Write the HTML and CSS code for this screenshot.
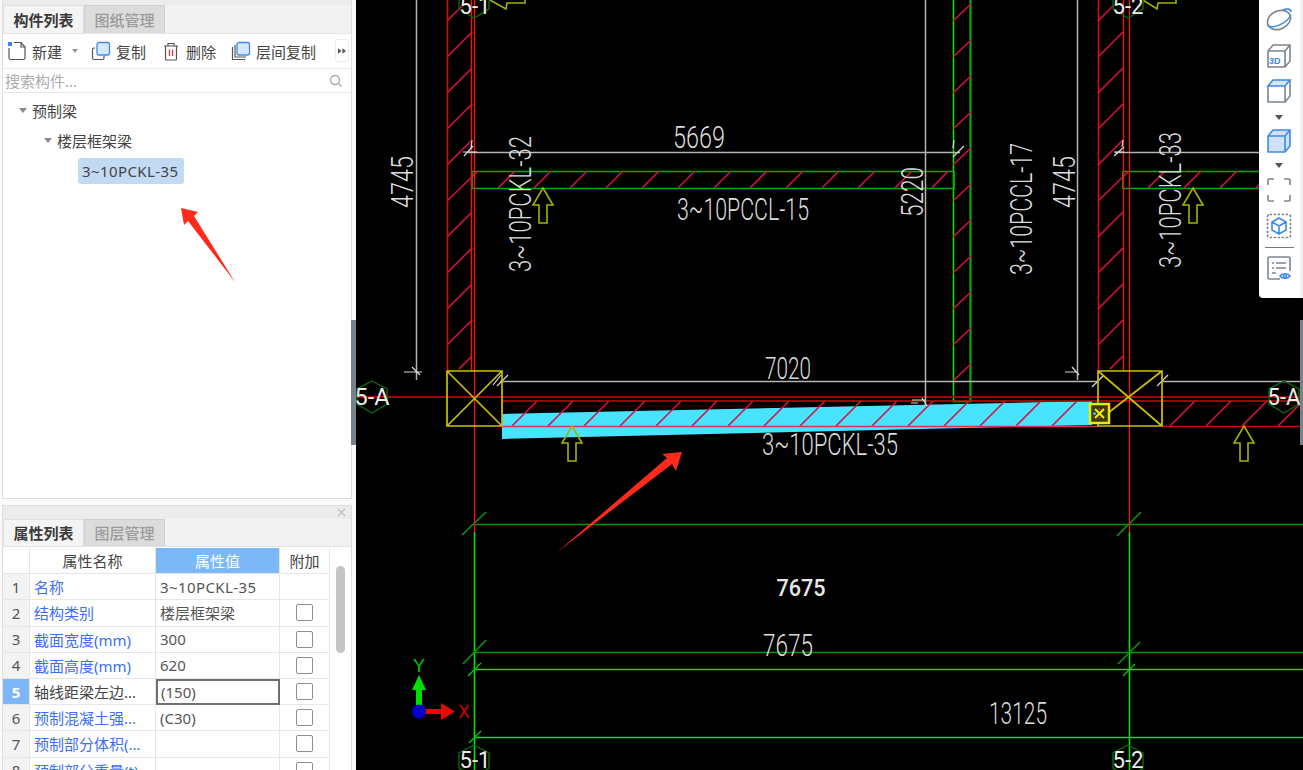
FILE: index.html
```html
<!DOCTYPE html>
<html lang="zh">
<head>
<meta charset="utf-8">
<title>构件列表</title>
<link rel="stylesheet" href="styles.css">
</head>
<body>
<div class="app">
  <aside class="sidebar">
    <section class="panel panel-list">
      <div class="panel-top thin"></div>
      <div class="tabs">
        <div class="tab active">构件列表</div>
        <div class="tab">图纸管理</div>
      </div>
      <div class="tools">
        <div class="tool t-new">
          <svg class="ico" viewBox="0 0 20 20"><path class="ln" d="M2 7v10a1.500 1.500 0 0 0 1.500 1.500h13a1.500 1.500 0 0 0 1.500-1.500V6l-4-4.500H7"/><path class="ln" d="M14 1.500V6h4"/><rect class="bl" x="1" y="1" width="4" height="4"/></svg>
          <span>新建</span><i class="caret"></i>
        </div>
        <div class="tool t-copy">
          <svg class="ico" viewBox="0 0 20 20"><path class="ln" d="M4 7H3a1.500 1.500 0 0 0-1.500 1.500v8.500A1.500 1.500 0 0 0 3 18.500h8.500A1.500 1.500 0 0 0 13 17v-2"/><rect class="blf" x="6" y="1.500" width="12.500" height="12.500" rx="2"/></svg>
          <span>复制</span>
        </div>
        <div class="tool t-del">
          <svg class="ico" viewBox="0 0 20 20"><path class="ln" d="M3 5h14M7 5V2.500h6V5M4.500 5v13a1 1 0 0 0 1 1h9a1 1 0 0 0 1-1V5"/><path class="rd" d="M8.500 8.500v6.500M11.500 8.500v6.500"/></svg>
          <span>删除</span>
        </div>
        <div class="tool t-floor">
          <svg class="ico" viewBox="0 0 20 20"><path class="ln" d="M1.500 6v12.500H14M4 4v12h11"/><rect class="blf" x="6" y="1.500" width="12.500" height="12.500" rx="2"/></svg>
          <span>层间复制</span>
        </div>
        <div class="more"><svg class="more-ico" viewBox="0 0 9 6"><path d="M0 0l4 3-4 3ZM5 0l4 3-4 3Z"/></svg></div>
      </div>
      <div class="search">
        <span>搜索构件...</span>
        <svg class="mag" viewBox="0 0 14 14"><circle cx="6" cy="6" r="4.500"/><path d="M9.500 9.500l3 3"/></svg>
      </div>
      <ul class="tree">
        <li class="lvl1"><i class="arrow"></i>预制梁</li>
        <li class="lvl2"><i class="arrow"></i>楼层框架梁</li>
        <li class="lvl3"><span class="chip">3~10PCKL-35</span></li>
      </ul>
    </section>

    <section class="panel panel-props">
      <div class="panel-top"><svg class="close" viewBox="0 0 10 10"><path d="M1 1l8 8M9 1l-8 8"/></svg></div>
      <div class="tabs">
        <div class="tab active">属性列表</div>
        <div class="tab">图层管理</div>
      </div>
      <div class="props">
        <div class="grid">
          <div class="c num"></div><div class="c head">属性名称</div><div class="c head hl">属性值</div><div class="c head">附加</div>
          <div class="c num">1</div><div class="c name">名称</div><div class="c val wide">3~10PCKL-35</div><div class="c chk"></div>
          <div class="c num">2</div><div class="c name">结构类别</div><div class="c val">楼层框架梁</div><div class="c chk"><i></i></div>
          <div class="c num">3</div><div class="c name">截面宽度(mm)</div><div class="c val">300</div><div class="c chk"><i></i></div>
          <div class="c num">4</div><div class="c name">截面高度(mm)</div><div class="c val">620</div><div class="c chk"><i></i></div>
          <div class="c num sel">5</div><div class="c name plain">轴线距梁左边...</div><div class="c val edit">(150)</div><div class="c chk"><i></i></div>
          <div class="c num">6</div><div class="c name">预制混凝土强...</div><div class="c val">(C30)</div><div class="c chk"><i></i></div>
          <div class="c num">7</div><div class="c name">预制部分体积(...</div><div class="c val"></div><div class="c chk"><i></i></div>
          <div class="c num">8</div><div class="c name">预制部分重量(t)</div><div class="c val"></div><div class="c chk"><i></i></div>
        </div>
        <div class="scroll"><div class="thumb"></div></div>
      </div>
    </section>

    <div class="splitter"></div>
    <svg class="mark" viewBox="0 0 60 80"><polygon points="4,4 21,8 17,12 58,78 11,17 7,21"/></svg>
  </aside>

  <main class="canvas">
    <svg class="cad-svg" viewBox="356 0 947 770">
      <!-- green grid below -->
      <path class="g-dk" d="M474 524.500H1303M474 652.500H1303"/>
      <path class="g-br" d="M474 669.500H1303M474 737.500H1303M474.500 532V770M1129.500 532V770"/>
      <path class="g-dk" d="M462 535l24-23M1117 536l24-24M463 664l23-24M1118 664l22-22"/>
      <path class="g-br1" d="M468 676l13-13M1123 676l12-12M469 743l12-12"/>

      <!-- cyan beam -->
      <polygon class="cyan" points="502,414 1092,401 1092,425 502,439"/>

      <!-- green members -->
      <path class="g-br" d="M953.500 0V401.500H970.500V0"/>
      <path class="g-dk2" d="M970.500 0V401.500M472 171.500H954V188.500H472ZM1260 171.500H1123V188.500H1260"/>
      <!-- hatching -->
      <path class="hatch" d="M447 21l16-16M447 57l25-25M447 93l25-25M447 129l25-25M447 165l25-25M447 201l31-30M447 237l25-25M447 273l25-25M447 309l25-25M447 345l25-25M459 369l13-13"/>
      <path class="hatch" d="M1098 21l16-16M1098 57l25-25M1098 93l25-25M1098 129l25-25M1098 165l25-25M1098 201l31-30M1098 237l25-25M1098 273l25-25M1098 309l25-25M1098 345l25-25M1110 369l13-13"/>
      <path class="hatch" d="M953 21l18-17M953 57l18-17M953 93l18-17M953 129l18-17M953 165l18-17M953 201l18-17M953 237l18-17M953 273l18-17M953 309l18-17M953 345l18-17M953 381l18-17"/>
      <path class="hatch" d="M498 188l17-17M534 188l17-17M570 188l17-17M606 188l17-17M642 188l17-17M678 188l17-17M714 188l17-17M750 188l17-17M786 188l17-17M822 188l17-17M858 188l17-17M895 188l17-17M932 188l16-17M1148 188l17-17M1184 188l17-17M1220 188l17-17M1256 188l8-8"/>
      <path class="hatch" d="M512 426l25-25M548 426l25-25M584 426l25-25M620 426l25-25M656 426l25-25M692 426l25-25M728 426l25-25M764 426l25-25M800 426l25-25M836 426l25-25M872 426l25-25M908 426l25-25M944 426l25-25M980 426l25-25M1016 426l25-25M1052 426l25-25M1170 426l25-25M1206 426l25-25M1242 426l25-25M1278 426l25-25"/>

      <!-- red lines -->
      <path class="r-dk" d="M356 397H1303"/>
      <path class="r-v" d="M447.500 0V371M1098.500 0V371"/>
      <path class="r-md" d="M502 401H1303M1162 401V426M502 401V414"/>
      <path class="r-pk" d="M502 426.500H1098"/>
      <path class="r-md" d="M1162 426.500H1303"/>
      <path class="r-br" d="M471.500 0V371M474.500 0V532M1123.500 0V371M1129.500 0V532"/>

      <!-- dimension lines -->
      <path class="dim" d="M416.500 0V380M468 152.500H960M1115 152.500H1260M925.500 0V405M1077.500 0V380M500 381.500H1098M1162 381.500H1303"/>
      <path class="dim1" d="M463 152h14M473 146l-9 10M472 140l-1 8M953 157l11-11M954 140l-1 8M1114 152h10M1124 147l-10 9M1123 140l-1 7M404 372h18M412 367l8 8M497 386l11-11M501 375l-8 10M1092 387l11-11M1157 386l11-11M918 403h-7M922 398l5 8M912 400h14M1065 372h11M1072 367l7 8"/>

      <!-- columns -->
      <path class="yel" d="M447 371H502V426H447ZM447 371L502 426M502 371L447 426M1098 371H1162V426H1098ZM1098 371L1162 426M1162 371L1108 413"/>

      <!-- snap marker -->
      <rect class="snap" x="1090" y="404" width="19" height="19"/>
      <path class="snap-x" d="M1095 409l9 9M1104 409l-9 9"/>
      <circle class="snap-r" cx="1099.500" cy="409" r="1"/>
      <circle class="snap-r" cx="1099.500" cy="418" r="1"/>
      <circle class="snap-c" cx="1094.500" cy="413.500" r="1.500"/>

      <!-- arrows -->
      <path class="up" d="M572 426l10 17h-6v18h-8v-18h-6Z"/>
      <path class="up" d="M543 188l10 17h-6v18h-8v-18h-6Z"/>
      <path class="up" d="M1193 188l10 17h-6v18h-8v-18h-6Z"/>
      <path class="up" d="M1244 426l10 17h-6v18h-8v-18h-6Z"/>
      <path class="up" d="M490 0l16 9 1-6h18V0"/>
      <path class="up" d="M1143 0l14 9 1-6h18V0"/>

      <!-- axis hexagons -->
      <path class="hex" d="M372 381l15 8v15l-15 9-15-9v-15Z"/>
      <path class="hex" d="M1284 381l15 8v15l-15 9-15-9v-15Z"/>
      <path class="hex" d="M474 -14l15 8v15l-15 9-15-9v-15Z"/>
      <path class="hex" d="M1128 -14l15 8v15l-15 9-15-9v-15Z"/>
      <path class="hex" d="M474 745l15 8v15l-15 9-15-9v-15Z"/>
      <path class="hex" d="M1128 745l15 8v15l-15 9-15-9v-15Z"/>

      <!-- CAD texts -->
      <text class="cad" x="699" y="148" textLength="52" lengthAdjust="spacingAndGlyphs">5669</text>
      <text class="cad" x="743" y="220" textLength="132" lengthAdjust="spacingAndGlyphs">3~10PCCL-15</text>
      <text class="cad" x="788" y="379" textLength="46" lengthAdjust="spacingAndGlyphs">7020</text>
      <text class="cad" x="830" y="455" textLength="136" lengthAdjust="spacingAndGlyphs">3~10PCKL-35</text>
      <text class="cad" x="788" y="656" textLength="50" lengthAdjust="spacingAndGlyphs">7675</text>
      <text class="cad" x="1018" y="724" textLength="58" lengthAdjust="spacingAndGlyphs">13125</text>
      <text class="cad" transform="rotate(-90 413 182)" x="413" y="182" textLength="52" lengthAdjust="spacingAndGlyphs">4745</text>
      <text class="cad" transform="rotate(-90 531 204)" x="531" y="204" textLength="136" lengthAdjust="spacingAndGlyphs">3~10PCKL-32</text>
      <text class="cad" transform="rotate(-90 923 192)" x="923" y="192" textLength="50" lengthAdjust="spacingAndGlyphs">5220</text>
      <text class="cad" transform="rotate(-90 1032 209)" x="1032" y="209" textLength="132" lengthAdjust="spacingAndGlyphs">3~10PCCL-17</text>
      <text class="cad" transform="rotate(-90 1075 182)" x="1075" y="182" textLength="52" lengthAdjust="spacingAndGlyphs">4745</text>
      <text class="cad" transform="rotate(-90 1181 200)" x="1181" y="200" textLength="136" lengthAdjust="spacingAndGlyphs">3~10PCKL-33</text>
      <text class="axis" x="372" y="405" textLength="35" lengthAdjust="spacingAndGlyphs">5-A</text>
      <text class="axis" x="1284" y="405" textLength="33" lengthAdjust="spacingAndGlyphs">5-A</text>
      <text class="axis" x="475" y="14" textLength="31" lengthAdjust="spacingAndGlyphs">5-1</text>
      <text class="axis" x="1128" y="14" textLength="31" lengthAdjust="spacingAndGlyphs">5-2</text>
      <text class="axis" x="475" y="768" textLength="31" lengthAdjust="spacingAndGlyphs">5-1</text>
      <text class="axis" x="1128" y="768" textLength="31" lengthAdjust="spacingAndGlyphs">5-2</text>
      <text class="bold-dim" x="801" y="596" textLength="49" lengthAdjust="spacingAndGlyphs">7675</text>

      <!-- coordinate axes -->
      <path class="ax-g" d="M419 675l7 15h-4v16h-6v-16h-4Z"/>
      <path class="ax-r" d="M425 709h16v-6l14 8.500-14 8.500v-6h-16Z"/>
      <circle class="ax-b" cx="419" cy="711.500" r="7"/>
      <text class="ax-y" x="419" y="672" textLength="12" lengthAdjust="spacingAndGlyphs">Y</text>
      <text class="ax-x" x="464" y="718" textLength="11" lengthAdjust="spacingAndGlyphs">X</text>

      <!-- annotation arrow -->
      <polygon class="mark-fill" points="556,553 667,458 662,454 682,452 676,471 672,464"/>
    </svg>

    <nav class="viewbar">
      <svg class="vb v-planet" viewBox="0 0 26 26"><ellipse class="gr" cx="13" cy="13" rx="12" ry="9" transform="rotate(-25 13 13)"/><path class="blu" d="M1 18c6 5 20-2 24-10M17 3c4-2 8-1 8 2"/></svg>
      <svg class="vb v-3d" viewBox="0 0 26 26"><path class="gr" d="M2 8l5-6h17v16l-5 6H2ZM2 8h17v16M19 8l5-6"/><text class="t3d" x="3" y="21">3D</text></svg>
      <svg class="vb v-top" viewBox="0 0 26 26"><path class="gr" d="M2 8v16h17l5-6V2M19 8v16"/><path class="bluf" d="M2 8l5-6h17l-5 6Z"/></svg>
      <i class="vcaret c-one"></i>
      <svg class="vb v-solid" viewBox="0 0 26 26"><path class="blf2" d="M2 8l5-6h17v16l-5 6H2Z"/><path class="blu" d="M2 8h17v16M19 8l5-6"/></svg>
      <i class="vcaret"></i>
      <svg class="vb v-frame" viewBox="0 0 26 26"><path class="gr" d="M2 8V3a1 1 0 0 1 1-1h5M18 2h5a1 1 0 0 1 1 1v5M24 18v5a1 1 0 0 1-1 1h-5M8 24H3a1 1 0 0 1-1-1v-5"/></svg>
      <svg class="vb v-cube" viewBox="0 0 26 26"><rect class="gr dash" x="1.500" y="1.500" width="23" height="23" rx="2"/><path class="blu" d="M13 5l7 4v8l-7 4-7-4V9ZM6 9l7 4 7-4M13 13v8"/></svg>
      <div class="vsep"></div>
      <svg class="vb v-list" viewBox="0 0 26 26"><path class="gr" d="M14 24H3a1 1 0 0 1-1-1V3a1 1 0 0 1 1-1h20a1 1 0 0 1 1 1v13M6 8h2M10 8h10M6 13h2M10 13h10M6 18h4"/><path class="blu" d="M14 21c2-3 8-3 10 0-2 3-8 3-10 0Z"/><circle class="blu" cx="19" cy="21" r="1.500"/></svg>
    </nav>
    <div class="edge-right"></div>
  </main>
</div>
</body>
</html>
```
FILE: styles.css
```css
* { box-sizing: border-box; }
html, body { margin: 0; padding: 0; height: 100%; overflow: hidden; }
body { font-family: "Noto Sans", "Noto Sans CJK SC", "Liberation Sans", sans-serif; font-size: 15px; color: #444; background: #fff; }
.app { display: flex; width: 1303px; height: 770px; overflow: hidden; }

/* sidebar */
.sidebar { position: relative; flex: 0 0 356px; height: 770px; padding: 0 4px 0 2px; background: #fafafa; display: flex; flex-direction: column; gap: 6px; overflow: visible; z-index: 2; }
.panel { border: 1px solid #dedede; border-top: 0; background: #fff; display: flex; flex-direction: column; }
.panel-list { height: 499px; }
.panel-props { flex: 1; min-height: 0; overflow: hidden; border-top: 1px solid #dedede; border-bottom: 0; }
.panel-top { height: 13px; background: #ececec; position: relative; }
.panel-top.thin { height: 5px; }
.close { position: absolute; right: 5px; top: 2px; width: 9px; height: 9px; fill: none; stroke: #b5b5b5; stroke-width: 1.200; }
.tabs { display: flex; height: 29px; flex: none; background: #f2f2f2; border-bottom: 1px solid #e4e4e4; }
.panel-props .tabs { height: 28px; }
.panel-props .tab { padding-bottom: 1px; }
.tab { width: 81px; display: flex; align-items: center; justify-content: center; font-size: 15px; font-weight: 500; color: #9a9a9a; background: #dcdcdc; border: 1px solid #d0d0d0; border-bottom: 0; }
.tab.active { color: #3a3a3a; background: #f4f4f4; font-weight: 700; border-color: #e0e0e0; }

.tools { display: flex; align-items: center; height: 35px; flex: none; position: relative; padding-left: 4px; background: #fff; border-bottom: 1px solid #e8e8e8; }
.tool { display: flex; align-items: center; gap: 5px; color: #444; font-size: 15px; }
.ico { width: 20px; height: 20px; flex: none; }
.ln { fill: none; stroke: #555; stroke-width: 1.200; }
.bl { fill: #3b86e8; }
.blf { fill: #d6e6fb; stroke: #3f8ae6; stroke-width: 1.300; }
.rd { fill: none; stroke: #e23b3b; stroke-width: 1.300; }
.caret { width: 0; height: 0; margin-left: 5px; border: 3px solid transparent; border-top: 4px solid #999; border-bottom: 0; }
.t-copy { margin-left: 13px; }
.t-del { margin-left: 15px; }
.t-floor { margin-left: 15px; }
.more { position: absolute; right: 2px; top: 5px; width: 14px; height: 23px; display: flex; align-items: center; justify-content: center; border: 1px solid #ececec; border-radius: 3px; }
.more-ico { width: 8px; height: 6px; fill: #555; }

.search { display: flex; justify-content: space-between; align-items: center; height: 24px; flex: none; padding: 0 8px 0 2px; color: #ababab; border-bottom: 1px solid #e8e8e8; font-size: 15px; }
.mag { width: 14px; height: 14px; fill: none; stroke: #a8a8a8; stroke-width: 1.300; }

.tree { list-style: none; margin: 0; padding: 2px 0 0; flex: 1; font-size: 15px; color: #444; }
.tree li { display: flex; align-items: center; height: 30px; }
.lvl1 { padding-left: 16px; }
.lvl2 { padding-left: 41px; }
.tree .lvl3 { padding-left: 75px; margin-top: 1px; }
.arrow { width: 0; height: 0; margin-right: 5px; border: 4px solid transparent; border-top: 5px solid #8a8a8a; border-bottom: 0; }
.chip { display: block; width: 106px; height: 26px; line-height: 26px; padding-left: 4px; border-radius: 3px; background: #c3daf4; color: #444; white-space: nowrap; letter-spacing: .4px; }

/* properties */
.props { flex: 1; display: flex; min-height: 0; overflow: hidden; }
.grid { display: grid; grid-template-columns: 27px 126px 124px 50px; grid-auto-rows: 26.200px; flex: none; align-content: start; margin-top: 1px; }
.c { display: flex; align-items: center; padding-left: 4px; border-right: 1px solid #e6e6e6; border-bottom: 1px solid #e6e6e6; white-space: nowrap; overflow: hidden; font-size: 15px; }
.num { justify-content: center; padding: 0; color: #555; background: #f3f3f3; }
.num:first-child { background: #fff; }
.num.sel { background: #7cb8f7; color: #fff; font-weight: 700; }
.head { justify-content: center; padding: 0; color: #444; background: #fff; }
.head.hl { background: #7cb8f7; color: #fff; }
.name { color: #3d6ff0; }
.name.plain { color: #444; }
.val { color: #555; }
.val.wide { letter-spacing: .4px; }
.val.edit { border: 2px solid #6f6f6f; padding-left: 3px; }
.chk { justify-content: center; padding: 0; }
.chk i { display: block; width: 17px; height: 17px; border: 1px solid #8f8f8f; border-radius: 2px; background: #fff; }
.scroll { flex: 1; position: relative; }
.thumb { position: absolute; left: 6px; top: 19px; width: 9px; height: 87px; border-radius: 5px; background: #c4c4c4; }

.splitter { position: absolute; left: 351px; top: 320px; width: 5px; height: 125px; background: #78828e; }
.mark { position: absolute; left: 177px; top: 204px; width: 60px; height: 80px; fill: #ff2a1a; }

/* canvas */
.canvas { position: relative; flex: 1; height: 770px; background: #000; overflow: hidden; }
.cad-svg { display: block; width: 947px; height: 770px; }
.cad-svg path, .cad-svg polygon { fill: none; }
.g-dk { stroke: #0a900a; stroke-width: 1.700; }
.g-dk2 { stroke: #0aa80a; stroke-width: 1.700; }
.g-br { stroke: #0be00b; stroke-width: 1.600; }
.g-br1 { stroke: #0fc40f; stroke-width: 1.300; }
.cad-svg .cyan { fill: #47e3ff; }
.hatch { stroke: #d81040; stroke-width: 1.600; }
.r-dk { stroke: #a80000; stroke-width: 2; }
.r-v { stroke: #d80a0a; stroke-width: 1.600; }
.r-md { stroke: #c80a0a; stroke-width: 1.700; }
.r-pk { stroke: #e0305a; stroke-width: 1.500; }
.r-br { stroke: #fa1010; stroke-width: 1.300; }
.dim { stroke: #b4b4b4; stroke-width: 1.500; }
.dim1 { stroke: #dadada; stroke-width: 1.200; }
.yel { stroke: #c8c000; stroke-width: 1.700; }
.cad-svg .snap { fill: #3a3a10; stroke: #f0ea00; stroke-width: 2.500; }
.snap-x { stroke: #f4ee00; stroke-width: 2; }
.snap-r { fill: #e02020; }
.snap-c { fill: #47b8ff; }
.up { stroke: #a4b200; stroke-width: 1.600; }
.hex { stroke: #0a6a0a; stroke-width: 1.400; }
.cad { font-family: Roboto, "Liberation Sans", sans-serif; font-weight: 300; font-size: 31px; fill: #dcdcdc; text-anchor: middle; }
.axis { font-family: Roboto, "Liberation Sans", sans-serif; font-weight: 400; font-size: 24px; fill: #ececec; text-anchor: middle; }
.bold-dim { font-family: Roboto, "Liberation Sans", sans-serif; font-weight: 500; font-size: 23px; fill: #e8e8e8; text-anchor: middle; }
.cad-svg .ax-g { fill: #00e000; }
.cad-svg .ax-r { fill: #f00000; }
.ax-b { fill: #0000c8; }
.ax-y { font-family: "Liberation Sans", sans-serif; font-size: 19px; fill: #00c800; text-anchor: middle; }
.ax-x { font-family: "Liberation Sans", sans-serif; font-size: 19px; fill: #e00000; text-anchor: middle; }
.cad-svg .mark-fill { fill: #ff2a1a; }

/* right view toolbar */
.viewbar { position: absolute; top: 0; right: 0; width: 44px; height: 298px; padding: 7px 4px 0 0; background: #fff; display: flex; flex-direction: column; align-items: center; border-radius: 0 0 0 4px; box-shadow: inset -3px 0 0 #f2f2f2; }
.vb { width: 26px; height: 26px; flex: none; overflow: visible; }
.viewbar svg path, .viewbar svg ellipse, .viewbar svg rect, .viewbar svg circle { fill: none; }
.viewbar .gr { stroke: #7d8591; stroke-width: 1.600; }
.viewbar .blu { stroke: #3f8ae6; stroke-width: 1.600; }
.viewbar .bluf { fill: #d6e6fb; stroke: #3f8ae6; stroke-width: 1.600; }
.viewbar .blf2 { fill: #cfe2fa; stroke: #3f8ae6; stroke-width: 1.600; }
.dash { stroke-dasharray: 2.500 1.500; }
.t3d { font-family: "Liberation Sans", sans-serif; font-size: 9px; font-weight: 700; fill: #3f8ae6; }
.v-3d { margin-top: 10px; }
.v-top { margin-top: 9px; }
.vcaret { width: 0; height: 0; margin-top: 9px; flex: none; border: 4px solid transparent; border-top: 5px solid #555; border-bottom: 0; }
.vcaret.c-one { margin-top: 11px; }
.v-solid { margin-top: 8px; }
.v-frame { margin-top: 9px; }
.v-cube { margin-top: 10px; }
.vsep { width: 29px; height: 1px; margin-top: 8px; flex: none; background: #777; }
.v-list { margin-top: 7px; }
.edge-right { position: absolute; right: 0; top: 320px; width: 3px; height: 125px; background: #78828e; }
```
